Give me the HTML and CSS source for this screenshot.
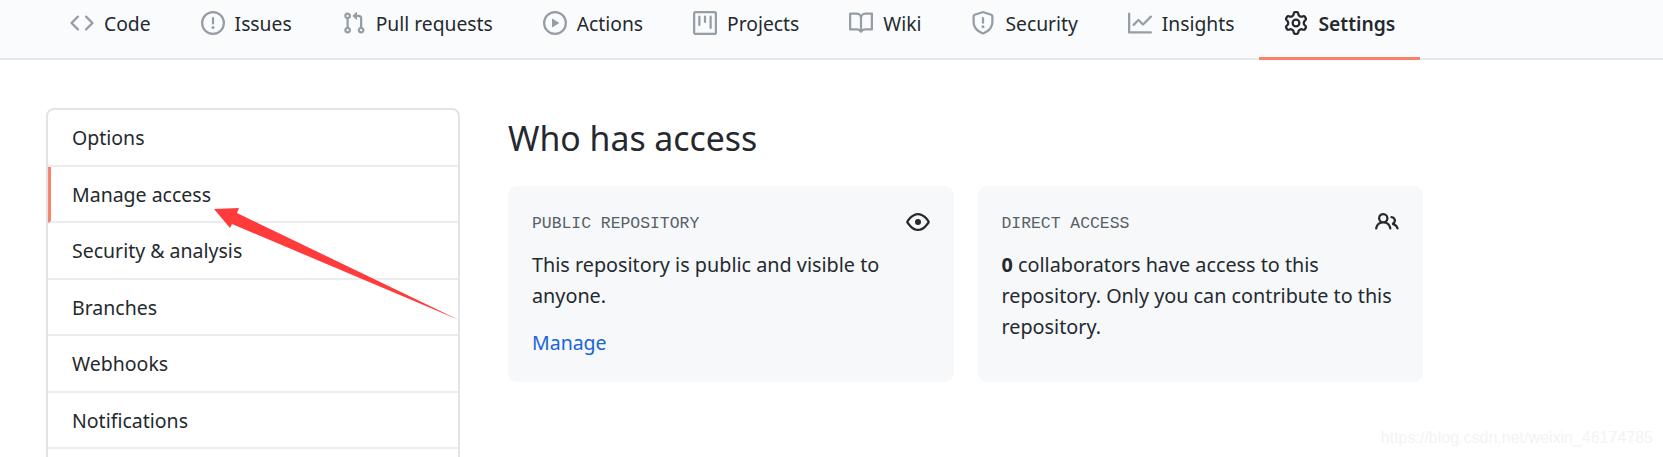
FILE: index.html
```html
<!DOCTYPE html>
<html lang="en">
<head>
    <meta charset="UTF-8">
    <meta name="viewport" content="width=device-width, initial-scale=1.0">
    <title>Manage access</title>
    <link rel="stylesheet" href="styles.css">
</head>
<body>
    <nav class="repo-nav">
        <a class="tab"><svg class="tab-icon" viewBox="0 0 16 16"><path fill-rule="evenodd" d="M4.72 3.22a.75.75 0 011.06 1.06L2.06 8l3.72 3.72a.75.75 0 11-1.06 1.06L.47 8.53a.75.75 0 010-1.06l4.25-4.25zm6.56 0a.75.75 0 10-1.06 1.06L13.94 8l-3.72 3.72a.75.75 0 101.06 1.06l4.25-4.25a.75.75 0 000-1.06l-4.25-4.25z"/></svg>Code</a>
        <a class="tab"><svg class="tab-icon" viewBox="0 0 16 16"><path fill-rule="evenodd" d="M8 1.5a6.5 6.5 0 100 13 6.5 6.5 0 000-13zM0 8a8 8 0 1116 0A8 8 0 010 8zm9 3a1 1 0 11-2 0 1 1 0 012 0zm-.25-6.25a.75.75 0 00-1.5 0v3.5a.75.75 0 001.5 0v-3.5z"/></svg>Issues</a>
        <a class="tab"><svg class="tab-icon" viewBox="0 0 16 16"><path fill-rule="evenodd" d="M7.177 3.073L9.573.677A.25.25 0 0110 .854v4.792a.25.25 0 01-.427.177L7.177 3.427a.25.25 0 010-.354zM3.75 2.5a.75.75 0 100 1.5.75.75 0 000-1.5zm-2.25.75a2.25 2.25 0 113 2.122v5.256a2.251 2.251 0 11-1.5 0V5.372A2.25 2.25 0 011.5 3.25zM11 2.5h-1V4h1a1 1 0 011 1v5.628a2.251 2.251 0 101.5 0V5A2.5 2.5 0 0011 2.5zm1 10.25a.75.75 0 111.5 0 .75.75 0 01-1.5 0zM3.75 12a.75.75 0 100 1.5.75.75 0 000-1.5z"/></svg>Pull requests</a>
        <a class="tab"><svg class="tab-icon" viewBox="0 0 16 16"><path fill-rule="evenodd" d="M1.5 8a6.5 6.5 0 1113 0 6.5 6.5 0 01-13 0zM8 0a8 8 0 100 16A8 8 0 008 0zM6.379 5.227A.25.25 0 006 5.442v5.117a.25.25 0 00.379.214l4.264-2.559a.25.25 0 000-.428L6.379 5.227z"/></svg>Actions</a>
        <a class="tab"><svg class="tab-icon" viewBox="0 0 16 16"><path fill-rule="evenodd" d="M1.75 0A1.75 1.75 0 000 1.75v12.5C0 15.216.784 16 1.75 16h12.5A1.75 1.75 0 0016 14.25V1.75A1.75 1.75 0 0014.25 0H1.75zM1.5 1.75a.25.25 0 01.25-.25h12.5a.25.25 0 01.25.25v12.5a.25.25 0 01-.25.25H1.75a.25.25 0 01-.25-.25V1.75zM11.75 3a.75.75 0 00-.75.75v7.5a.75.75 0 001.5 0v-7.5a.75.75 0 00-.75-.75zm-8.25.75a.75.75 0 011.5 0v5.5a.75.75 0 01-1.5 0v-5.5zM8 3a.75.75 0 00-.75.75v3.5a.75.75 0 001.5 0v-3.5A.75.75 0 008 3z"/></svg>Projects</a>
        <a class="tab"><svg class="tab-icon" viewBox="0 0 16 16"><path fill-rule="evenodd" d="M0 1.75A.75.75 0 01.75 1h4.253c1.227 0 2.317.59 3 1.501A3.744 3.744 0 0111.006 1h4.245a.75.75 0 01.75.75v10.5a.75.75 0 01-.75.75h-4.507a2.25 2.25 0 00-1.591.659l-.622.621a.75.75 0 01-1.06 0l-.622-.621A2.25 2.25 0 005.258 13H.75a.75.75 0 01-.75-.75V1.75zm8.755 3a2.25 2.25 0 012.25-2.25H14.5v9h-3.757c-.71 0-1.4.201-1.992.572l.004-7.322zm-1.504 7.324l.004-5.073-.002-2.253A2.25 2.25 0 005.003 2.5H1.5v9h3.757a3.75 3.75 0 011.994.574z"/></svg>Wiki</a>
        <a class="tab"><svg class="tab-icon" viewBox="0 0 16 16"><path fill-rule="evenodd" d="M7.467.133a1.75 1.75 0 011.066 0l5.25 1.68A1.75 1.75 0 0115 3.48V7c0 1.566-.32 3.182-1.303 4.682-.983 1.498-2.585 2.813-5.032 3.855a1.7 1.7 0 01-1.33 0c-2.447-1.042-4.049-2.357-5.032-3.855C1.32 10.182 1 8.566 1 7V3.48a1.75 1.75 0 011.217-1.667l5.25-1.68zm.61 1.429a.25.25 0 00-.153 0l-5.25 1.68a.25.25 0 00-.174.238V7c0 1.358.275 2.666 1.057 3.86.784 1.194 2.121 2.34 4.366 3.297a.2.2 0 00.154 0c2.245-.956 3.582-2.104 4.366-3.298C13.225 9.666 13.5 8.36 13.5 7V3.48a.25.25 0 00-.174-.237l-5.25-1.68zM9 10.5a1 1 0 11-2 0 1 1 0 012 0zm-.25-5.75a.75.75 0 10-1.5 0v3a.75.75 0 001.5 0v-3z"/></svg>Security</a>
        <a class="tab"><svg class="tab-icon" viewBox="0 0 16 16"><path fill-rule="evenodd" d="M1.5 1.75a.75.75 0 00-1.5 0v12.5c0 .414.336.75.75.75h14.5a.75.75 0 000-1.5H1.5V1.75zm14.28 2.53a.75.75 0 00-1.06-1.06L10 7.94 7.53 5.47a.75.75 0 00-1.06 0L3.22 8.72a.75.75 0 001.06 1.06L7 7.06l2.47 2.47a.75.75 0 001.06 0l5.25-5.25z"/></svg>Insights</a>
        <a class="tab tab-active"><svg class="tab-icon" viewBox="0 0 16 16"><path fill-rule="evenodd" d="M7.429 1.525a6.593 6.593 0 011.142 0c.036.003.108.036.137.146l.289 1.105c.147.56.55.967.997 1.189.174.086.341.183.501.29.417.278.97.423 1.53.27l1.102-.303c.11-.03.175.016.195.046.219.31.41.641.573.989.014.031.022.11-.059.19l-.815.806c-.411.406-.562.957-.53 1.456a4.588 4.588 0 010 .582c-.032.499.119 1.05.53 1.456l.815.806c.08.08.073.159.059.19a6.494 6.494 0 01-.573.99c-.02.029-.086.074-.195.045l-1.103-.303c-.559-.153-1.112-.008-1.529.27-.16.107-.327.204-.5.29-.449.222-.851.628-.998 1.189l-.289 1.105c-.029.11-.101.143-.137.146a6.613 6.613 0 01-1.142 0c-.036-.003-.108-.037-.137-.146l-.289-1.105c-.147-.56-.55-.967-.997-1.189a4.502 4.502 0 01-.501-.29c-.417-.278-.97-.423-1.53-.27l-1.102.303c-.11.03-.175-.016-.195-.046a6.492 6.492 0 01-.573-.989c-.014-.031-.022-.11.059-.19l.815-.806c.411-.406.562-.957.53-1.456a4.587 4.587 0 010-.582c.032-.499-.119-1.05-.53-1.456l-.815-.806c-.08-.08-.073-.159-.059-.19a6.44 6.44 0 01.573-.99c.02-.029.086-.075.195-.045l1.103.303c.559.153 1.112.008 1.529-.27.16-.107.327-.204.5-.29.449-.222.851-.628.998-1.189l.289-1.105c.029-.11.101-.143.137-.146zM8 0c-.236 0-.47.01-.701.03-.743.065-1.29.615-1.458 1.261l-.29 1.106c-.017.066-.078.158-.211.224a5.994 5.994 0 00-.668.386c-.123.082-.233.09-.3.071L3.27 2.776c-.644-.177-1.392.02-1.82.63a7.977 7.977 0 00-.704 1.217c-.315.675-.111 1.422.363 1.891l.815.806c.05.048.098.147.088.294a6.084 6.084 0 000 .772c.01.147-.038.246-.088.294l-.815.806c-.474.469-.678 1.216-.363 1.891.2.428.436.835.704 1.218.428.609 1.176.806 1.82.63l1.103-.303c.066-.019.176-.011.299.071.213.143.436.272.668.386.133.066.194.158.212.224l.289 1.106c.169.646.715 1.196 1.458 1.26a8.094 8.094 0 001.402 0c.743-.064 1.29-.614 1.458-1.26l.29-1.106c.017-.066.078-.158.211-.224a5.98 5.98 0 00.668-.386c.123-.082.233-.09.3-.071l1.102.302c.644.177 1.392-.02 1.82-.63.268-.382.505-.789.704-1.217.315-.675.111-1.422-.364-1.891l-.814-.806c-.05-.048-.098-.147-.088-.294a6.1 6.1 0 000-.772c-.01-.147.039-.246.088-.294l.814-.806c.475-.469.679-1.216.364-1.891a7.992 7.992 0 00-.704-1.218c-.428-.609-1.176-.806-1.82-.63l-1.103.303c-.066.019-.176.011-.299-.071a5.991 5.991 0 00-.668-.386c-.133-.066-.194-.158-.212-.224L10.16 1.29C9.99.645 9.444.095 8.701.031A8.094 8.094 0 008 0zm1.5 8a1.5 1.5 0 11-3 0 1.5 1.5 0 013 0zM11 8a3 3 0 11-6 0 3 3 0 016 0z"/></svg>Settings</a>
    </nav>

    <div class="page">
        <ul class="side-menu">
            <li class="side-item">Options</li>
            <li class="side-item side-item-active">Manage access</li>
            <li class="side-item">Security &amp; analysis</li>
            <li class="side-item">Branches</li>
            <li class="side-item">Webhooks</li>
            <li class="side-item">Notifications</li>
            <li class="side-item"></li>
        </ul>

        <main class="content">
            <h1 class="title">Who has access</h1>
            <div class="cards">
                <section class="card">
                    <div class="card-head">
                        <span class="card-label">PUBLIC REPOSITORY</span>
                        <svg class="card-icon" viewBox="0 0 16 16"><path fill-rule="evenodd" d="M1.679 7.932c.412-.621 1.242-1.75 2.366-2.717C5.175 4.242 6.527 3.5 8 3.5c1.473 0 2.824.742 3.955 1.715 1.124.967 1.954 2.096 2.366 2.717a.119.119 0 010 .136c-.412.621-1.242 1.75-2.366 2.717C10.825 11.758 9.473 12.5 8 12.5c-1.473 0-2.824-.742-3.955-1.715C2.92 9.818 2.09 8.69 1.679 8.068a.119.119 0 010-.136zM8 2c-1.981 0-3.67.992-4.933 2.078C1.797 5.169.88 6.423.43 7.1a1.619 1.619 0 000 1.798c.45.678 1.367 1.932 2.637 3.024C4.329 13.008 6.019 14 8 14c1.981 0 3.67-.992 4.933-2.078 1.27-1.091 2.187-2.345 2.637-3.023a1.619 1.619 0 000-1.798c-.45-.678-1.367-1.932-2.637-3.023C11.671 2.992 9.981 2 8 2zm0 8a2 2 0 100-4 2 2 0 000 4z"/></svg>
                    </div>
                    <p class="card-text">This repository is public and visible to anyone.</p>
                    <a class="card-link">Manage</a>
                </section>
                <section class="card">
                    <div class="card-head">
                        <span class="card-label">DIRECT ACCESS</span>
                        <svg class="card-icon" viewBox="0 0 16 16"><path fill-rule="evenodd" d="M5.5 3.5a2 2 0 100 4 2 2 0 000-4zM2 5.5a3.5 3.5 0 115.898 2.549 5.507 5.507 0 013.034 4.084.75.75 0 11-1.482.235 4.001 4.001 0 00-7.9 0 .75.75 0 01-1.482-.236A5.507 5.507 0 013.102 8.05 3.49 3.49 0 012 5.5zM11 4a.75.75 0 100 1.5 1.5 1.5 0 01.666 2.844.75.75 0 00-.416.672v.352a.75.75 0 00.574.73c1.2.289 2.162 1.2 2.522 2.372a.75.75 0 101.434-.44 5.01 5.01 0 00-2.56-3.012A3 3 0 0011 4z"/></svg>
                    </div>
                    <p class="card-text"><strong>0</strong> collaborators have access to this repository. Only you can contribute to this repository.</p>
                </section>
            </div>
        </main>
    </div>

    <!-- red annotation arrow drawn over the screenshot -->
    <svg class="arrow" viewBox="0 0 1663 457"><polygon points="214,209 239,208 237,213 459,320 232,224 230,228"/></svg>
    <div class="watermark">https://blog.csdn.net/weixin_46174785</div>
</body>
</html>
```

FILE: styles.css
```css
html, body {
    height: 457px;
    overflow: hidden;
}
body {
    position: relative;
    margin: 0;
    font-family: "Noto Sans", "Open Sans", sans-serif;
    font-size: 19.5px;
    color: #24292e;
    background-color: #fff;
}

/* top tabs */
.repo-nav {
    display: flex;
    height: 58px;
    padding-left: 45px;
    font-size: 19.3px;
    background-color: #fafbfc;
    border-bottom: 2px solid #e6e8ec;
}
.tab {
    display: flex;
    align-items: center;
    box-sizing: border-box;
    height: 60px;
    padding: 0 25px 11px;
    white-space: nowrap;
    border-bottom: 3px solid transparent;
}
.tab-icon {
    width: 24px;
    height: 24px;
    margin-right: 10px;
    fill: #959da5;
}
.tab-active {
    font-weight: 600;
    border-bottom-color: #f9826c;
}
.tab-active .tab-icon {
    fill: #24292e;
}

.page {
    display: flex;
    align-items: flex-start;
    gap: 48px;
    box-sizing: border-box;
    height: 397px;
    padding: 48px 0 0 46px;
    overflow: hidden;
}

/* left menu */
.side-menu {
    flex: none;
    width: 414px;
    box-sizing: border-box;
    margin: 0;
    padding: 0;
    list-style: none;
    border: 2px solid #e1e4e8;
    border-radius: 8px;
}
.side-item {
    box-sizing: border-box;
    height: 56.5px;
    padding: 0 24px;
    line-height: 56px;
    border-bottom: 2px solid #eaecef;
}
.side-item-active {
    border-left: 3px solid #f9826c;
    padding-left: 21px;
}

/* right column */
.content {
    width: 915px;
}
.title {
    margin: 0 0 17px;
    font-size: 33.8px;
    font-weight: 400;
    line-height: 61px;
}
.cards {
    display: grid;
    grid-template-columns: 1fr 1fr;
    gap: 24px;
}
.card {
    height: 196px;
    box-sizing: border-box;
    padding: 24px;
    background-color: #f6f8fa;
    border-radius: 9px;
}
.card-head {
    display: flex;
    justify-content: space-between;
    align-items: center;
    height: 24px;
    margin-bottom: 15px;
}
.card-label {
    padding-top: 3px;
    font-family: "Liberation Mono", monospace;
    font-size: 16.4px;
    color: #586069;
}
.card-icon {
    width: 24px;
    height: 24px;
    fill: #24292e;
}
.card-text {
    margin: 0 0 16px;
    font-size: 19.8px;
    line-height: 31px;
}
.card-link {
    display: block;
    line-height: 31px;
    color: #1a64d8;
}

/* overlays */
.arrow {
    position: absolute;
    top: 0;
    left: 0;
    width: 1663px;
    height: 457px;
    fill: #ff3b3b;
}
.watermark {
    position: absolute;
    top: 429px;
    right: 10px;
    font-family: "Liberation Sans", sans-serif;
    font-size: 16px;
    color: #f3f3f3;
}
```
